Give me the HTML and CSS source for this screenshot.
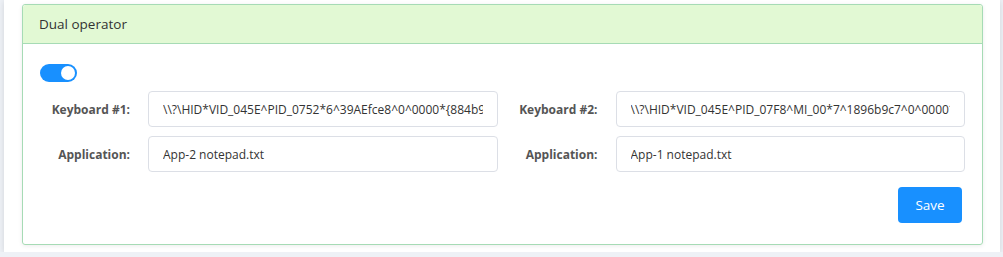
FILE: index.html
```html
<!DOCTYPE html>
<html lang="en">
<head>
    <meta charset="UTF-8">
    <meta name="viewport" content="width=device-width, initial-scale=1.0">
    <title>Dual operator</title>
    <link rel="stylesheet" href="styles.css">
</head>
<body>
<div class="panel">
    <div class="card">
        <div class="card-header">Dual operator</div>
        <div class="card-body">
            <!-- Enable switch -->
            <label class="switch">
                <input type="checkbox" checked>
                <span class="slider"></span>
            </label>

            <div class="fields">
                <div class="field">
                    <label for="kb1">Keyboard #1:</label>
                    <input type="text" id="kb1" value="\\?\HID*VID_045E^PID_0752*6^39AEfce8^0^0000*{884b96c3-56ef-11d1-bc8c-00a0c91405dd}">
                </div>
                <div class="field">
                    <label for="kb2">Keyboard #2:</label>
                    <input type="text" id="kb2" value="\\?\HID*VID_045E^PID_07F8^MI_00*7^1896b9c7^0^0000*{884b96c3-56ef-11d1-bc8c-00a0c91405dd}">
                </div>
                <div class="field">
                    <label for="app1">Application:</label>
                    <input type="text" id="app1" value="App-2 notepad.txt">
                </div>
                <div class="field">
                    <label for="app2">Application:</label>
                    <input type="text" id="app2" value="App-1 notepad.txt">
                </div>
            </div>

            <div class="actions">
                <button type="button" class="save-btn">Save</button>
            </div>
        </div>
    </div>
</div>
</body>
</html>
```

FILE: styles.css
```css
/* Page */
body {
    margin: 0;
    background-color: #eef1f6;
    font-family: "Open Sans", "Liberation Sans", sans-serif;
    font-size: 12px;
    color: #333;
}

/* White content panel */
.panel {
    margin-left: 4px;
    width: 996px;
    box-sizing: border-box;
    padding: 4px 17px 7px 18px;
    background-color: #fff;
    box-shadow: 0 1px 6px rgba(0, 0, 0, 0.12);
}

/* Card */
.card {
    border: 1px solid #a6dbb5;
    border-radius: 3px;
    box-shadow: 0 1px 4px rgba(0, 0, 0, 0.08);
}

.card-header {
    background-color: #e2f9d4;
    border-bottom: 1px solid #a6dbb5;
    border-radius: 3px 3px 0 0;
    height: 38px;
    line-height: 38px;
    padding-left: 16px;
    font-size: 13.5px;
    color: #333;
}

.card-body {
    padding: 20px 17px 21px 17px;
}

/* Toggle switch */
.switch {
    position: relative;
    display: block;
    width: 37px;
    height: 18px;
}

.switch input {
    display: none;
}

.slider {
    position: absolute;
    inset: 0;
    background-color: #1890ff;
    border-radius: 9px;
}

.slider::after {
    content: "";
    position: absolute;
    top: 2px;
    right: 2px;
    width: 14px;
    height: 14px;
    border-radius: 50%;
    background-color: #fff;
}

/* Form fields */
.fields {
    display: grid;
    grid-template-columns: 1fr 1fr;
    column-gap: 10px;
    row-gap: 9px;
    margin-top: 9px;
}

.field {
    display: flex;
    align-items: center;
}

.field label {
    width: 90px;
    flex-shrink: 0;
    margin-right: 18px;
    text-align: right;
    font-weight: bold;
    color: #555;
}

.field input {
    flex: 1;
    min-width: 0;
    height: 36px;
    box-sizing: border-box;
    padding: 0 14px;
    border: 1px solid #dcdfe6;
    border-radius: 4px;
    font-family: inherit;
    font-size: 12px;
    color: #333;
}

/* Save button */
.actions {
    display: flex;
    justify-content: flex-end;
    margin-top: 15px;
    padding-right: 3px;
}

.save-btn {
    background-color: #1890ff;
    color: #fff;
    border: none;
    border-radius: 4px;
    width: 64px;
    height: 36px;
    font-family: inherit;
    font-size: 13.5px;
    cursor: pointer;
}
```
